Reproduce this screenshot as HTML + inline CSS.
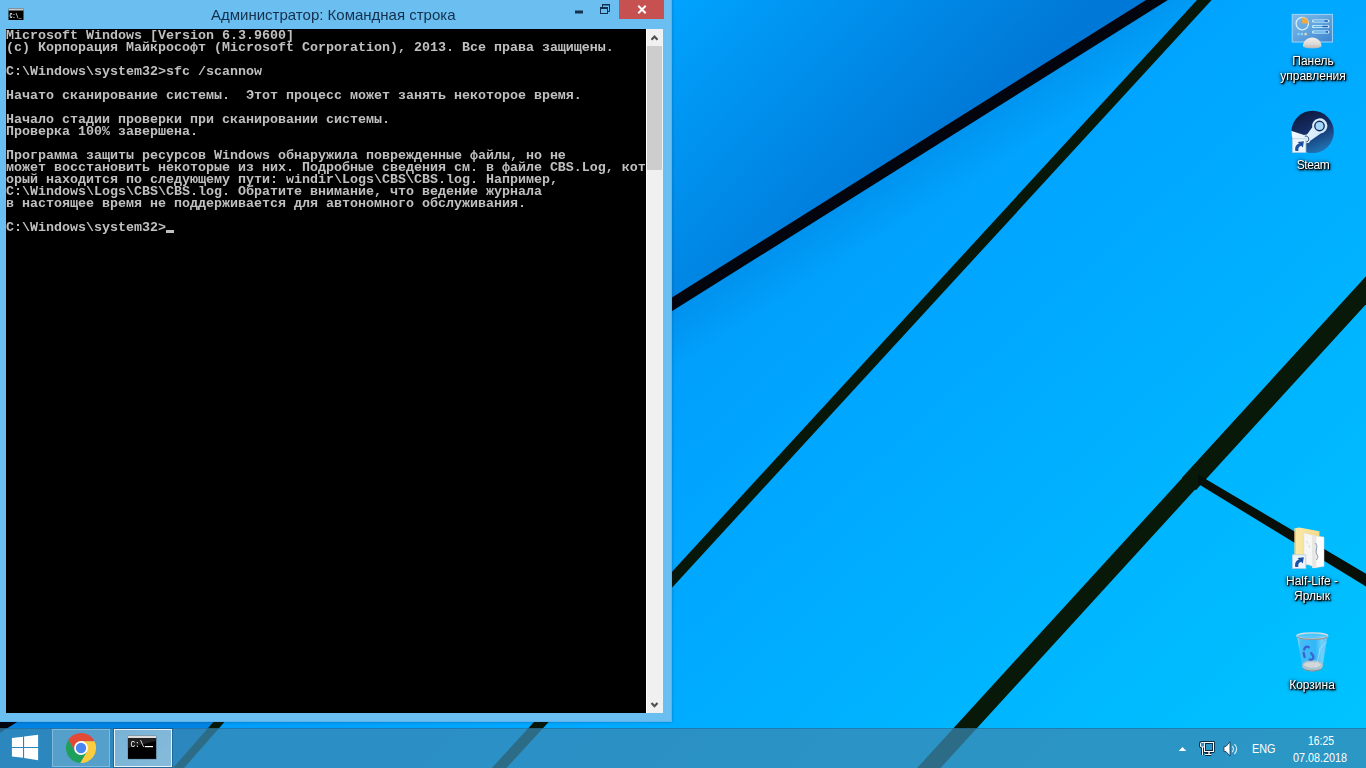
<!DOCTYPE html>
<html lang="ru">
<head>
<meta charset="utf-8">
<title>Администратор: Командная строка</title>
<style>
*{box-sizing:border-box;margin:0;padding:0}
html,body{width:1366px;height:768px;overflow:hidden;background:#0aa0f5;font-family:"Liberation Sans",sans-serif}
#desk{position:absolute;left:0;top:0;width:1366px;height:768px;overflow:hidden}
#wall{position:absolute;left:0;top:0}
/* ---------- cmd window ---------- */
#win{position:absolute;left:-1px;top:-1px;width:673px;height:723px;background:#6bbff0;border:1px solid #5fb3e8;box-shadow:0 0 3px rgba(0,20,90,.3)}
#title{position:absolute;left:0;top:0;width:672px;height:29px}
#title .cap{position:absolute;left:211px;top:6px;font-size:15px;line-height:18px;color:#14304d;white-space:nowrap;will-change:transform}
#client{position:absolute;left:6px;top:29px;width:640px;height:684px;background:#000;overflow:hidden}
#client pre{font-family:"Liberation Mono",monospace;font-weight:bold;font-size:13.333px;line-height:12px;color:#c0c0c0;white-space:pre;margin:0;position:absolute;left:0;top:1px;will-change:transform}
#sb{position:absolute;left:646px;top:29px;width:17px;height:684px;background:#f0f0f0;border-left:1px solid #fff;border-right:1px solid #e6f6fc}
#sb .thumb{position:absolute;left:0;top:17px;width:15px;height:124px;background:#cdcdcd}
#sb svg{position:absolute;left:0;top:0}
.close{position:absolute;left:619px;top:0;width:45px;height:19px;background:#c75050}
/* ---------- taskbar ---------- */
#tb{position:absolute;left:0;top:728px;width:1366px;height:40px;background:rgba(58,136,178,.75);box-shadow:inset 0 1px 0 rgba(0,60,110,.25)}
.tbtn{position:absolute;top:1px;height:39px;width:59px}
/* ---------- desktop icons ---------- */
.lbl{will-change:transform;position:absolute;width:100px;text-align:center;color:#fff;font-size:12px;line-height:15px;text-shadow:1px 1px 1px #000,1px 1px 2px #000,0 1px 3px rgba(0,0,0,.9),0 0 4px rgba(0,0,0,.7)}
.tray{position:absolute;color:#fff;font-size:12px;line-height:14px;white-space:nowrap}
</style>
</head>
<body>
<div id="desk">
<!-- WALLPAPER -->
<svg id="wall" width="1366" height="768" viewBox="0 0 1366 768">
<defs>
<linearGradient id="g0" gradientUnits="userSpaceOnUse" x1="777" y1="157" x2="1323" y2="753">
<stop offset="0" stop-color="#009bf9"/><stop offset=".25" stop-color="#00a5ff"/><stop offset="1" stop-color="#00c3ff"/>
</linearGradient>
<linearGradient id="g2" gradientUnits="userSpaceOnUse" x1="900" y1="161.200" x2="929.200" y2="207.800">
<stop offset="0" stop-color="#002878" stop-opacity=".11"/><stop offset="1" stop-color="#002878" stop-opacity="0"/>
</linearGradient>
<linearGradient id="g1" gradientUnits="userSpaceOnUse" x1="1095" y1="0" x2="880.5" y2="-210">
<stop offset="0" stop-color="#0078d7"/><stop offset="1" stop-color="#00a3fe"/>
</linearGradient>
</defs>
<rect width="1366" height="768" fill="url(#g0)"/>
<polygon points="-20,-20 1188.800,-20 -20,738.400" fill="url(#g1)"/>
<polygon points="1268.600,-70 478.900,790 -20,790 -20,738.400" fill="url(#g2)"/>
<polygon points="481.4,423 159.2,790 -20,790 -20,738.4" fill="#0083e2"/>
<g stroke-linecap="butt" fill="none">
<line x1="1200" y1="-27" x2="-20" y2="738.400" stroke="#02050e" stroke-width="11.600"/>
<line x1="1222.700" y1="-20" x2="478.900" y2="790" stroke="#07180a" stroke-width="10.800"/>
<line x1="1384" y1="270" x2="908.700" y2="790" stroke="#08190a" stroke-width="17.300"/>
<line x1="1384.500" y1="270" x2="1188.900" y2="484" stroke="#08190a" stroke-width="18.800"/>
<polygon points="1198,474.600 1370,576 1370,589 1198,483.800" fill="#070f08" stroke="none"/>
<line x1="240" y1="698" x2="159.2" y2="790" stroke="#081a04" stroke-width="8.3"/>
</g>
</svg>

<!-- DESKTOP ICONS -->
<svg id="icons" style="position:absolute;left:1266px;top:0" width="100" height="710" viewBox="1266 0 100 710">
<defs>
<linearGradient id="cp1" x1="0" y1="0" x2="1" y2="1"><stop offset="0" stop-color="#7fbbe9"/><stop offset=".5" stop-color="#5fa3df"/><stop offset="1" stop-color="#3f84ce"/></linearGradient>
<linearGradient id="cp2" x1="0" y1="0" x2="0" y2="1"><stop offset="0" stop-color="#f1efee"/><stop offset=".6" stop-color="#dcd9d7"/><stop offset="1" stop-color="#b9b6b4"/></linearGradient>
<linearGradient id="st1" x1=".2" y1="0" x2=".6" y2="1"><stop offset="0" stop-color="#0e1739"/><stop offset=".5" stop-color="#15306a"/><stop offset="1" stop-color="#2174b4"/></linearGradient>
<linearGradient id="st2" x1="0" y1="0" x2="1" y2=".3"><stop offset="0" stop-color="#ffffff"/><stop offset="1" stop-color="#cbe7fb"/></linearGradient>
<linearGradient id="fo1" x1="0" y1="0" x2="1" y2="0"><stop offset="0" stop-color="#fbeaa8"/><stop offset="1" stop-color="#f4d987"/></linearGradient>
<linearGradient id="rb1" x1="0" y1="0" x2="1" y2="0"><stop offset="0" stop-color="#b4e2fb" stop-opacity=".85"/><stop offset=".12" stop-color="#5cbcf4" stop-opacity=".75"/><stop offset=".6" stop-color="#48b4f4" stop-opacity=".7"/><stop offset=".8" stop-color="#8ad4fb" stop-opacity=".8"/><stop offset="1" stop-color="#6cc6f8" stop-opacity=".85"/></linearGradient>
<clipPath id="stc"><circle cx="1312.6" cy="131.9" r="21.2"/></clipPath>
<g id="sc"><rect x=".4" y=".4" width="13.400" height="13.600" fill="#edf5fc" stroke="#b4cde4" stroke-width=".8"/>
<path d="M3.300 12.700C2.500 8.700 4 6.100 7 5.400L5.600 3.500l6.200-.700-1 6.200-1.600-1.700C6.800 7.900 5.900 9.800 6.300 12.700z" fill="#1f4fa0"/></g>
</defs>

<!-- Control Panel -->
<rect x="1292.200" y="14.400" width="40.200" height="27.600" fill="url(#cp1)" stroke="#a4d3f5" stroke-width="1"/>
<circle cx="1302.250" cy="23.600" r="6.200" fill="none" stroke="#d3eefb" stroke-width="1.300"/>
<path d="M1302.250 23.600V17.200A6.400 6.400 0 0 1 1308.650 23.600z" fill="#f4aa3e"/>
<g stroke-linecap="round" fill="none"><path d="M1313.500 21h14.400M1313.500 26.500h14.400M1313.500 31.900h14.400" stroke="#d9f3fd" stroke-width="3"/>
<path d="M1314 21h13.400M1314 26.500h13.400M1314 31.900h13.400" stroke="#5aaee6" stroke-width="1.500"/>
<path d="M1325 21h2.400M1323 26.500h4.400M1326.500 31.900h1" stroke="#2a5fb4" stroke-width="1.600"/></g>
<circle cx="1298.500" cy="34.100" r="1.300" fill="#7ad8f6"/><circle cx="1301.900" cy="34.100" r="1.300" fill="#8fd3f5"/><circle cx="1305.600" cy="34.100" r="1.300" fill="#f0d7a8"/>
<path d="M1302.900 46c0-4.700 4.200-8.500 9.300-8.500s9.300 3.800 9.300 8.500c0 1.400-4.200 2.400-9.300 2.400s-9.300-1-9.300-2.400z" fill="url(#cp2)"/>
<!-- Steam -->
<circle cx="1312.6" cy="131.9" r="21.2" fill="url(#st1)"/>
<g clip-path="url(#stc)">
<path d="M1288 129.600L1304 135.100C1305 134.500 1306 134.300 1307 134.400L1312.300 127.300A7.600 7.600 0 1 1 1320.700 133.500L1310.300 140.700A3.800 3.800 0 0 1 1303 140.500L1300 139.500V160H1285z" fill="url(#st2)"/>
</g>
<circle cx="1319.5" cy="126" r="4.700" fill="#a3d8fa" stroke="#152a5c" stroke-width="1.400"/>
<path d="M1304.800 136.200a3 3 0 1 1 -.600 5.400" fill="none" stroke="#1a3a73" stroke-width=".9"/>
<use href="#sc" x="1292.100" y="138.400"/>

<!-- Half-Life shortcut (folder) -->
<polygon points="1294.6,528.300 1299.500,527.600 1319.400,531.200 1319.400,560 1303,566.500 1294.600,556" fill="url(#fo1)"/>
<polygon points="1294.600,528.300 1296,528.100 1296,557.500 1294.600,556" fill="#ecd07a"/>
<polygon points="1303.800,532.800 1316.500,536.200 1316.500,567.800 1303.800,563" fill="#f6f6f4" stroke="#d8d8d4" stroke-width=".5"/>
<polygon points="1312.500,535.600 1324,537 1324,566.400 1312.500,568" fill="#ffffff" stroke="#d4d4d0" stroke-width=".5"/>
<polygon points="1312.500,535.600 1316.500,536.200 1316.500,567.400 1312.500,568" fill="#e6e6e2"/>
<path d="M1315.500 543l1.500 3 -1 6 2 5 -1.500 3" stroke="#8b9bb3" stroke-width="1" fill="none"/>
<path d="M1306.500 541l1.200 2.500M1309 545l.8 3" stroke="#c3c9d3" stroke-width=".7" fill="none"/>
<use href="#sc" x="1292" y="554.400"/>

<!-- Recycle bin -->
<path d="M1297 636L1302.200 666.500c.300 2.800 4.700 4.900 10.200 4.900s9.900-2.100 10.200-4.900L1327.600 636z" fill="url(#rb1)"/>
<path d="M1302.200 664.500c1-2.600 5-4.300 10.200-4.300s9.200 1.700 10.200 4.300v2c-.300 2.800-4.700 4.900-10.200 4.900s-9.900-2.100-10.200-4.900z" fill="#c4c4c2" opacity=".8"/>
<path d="M1302.300 667.200c.600 2.500 4.900 4.200 10.100 4.200s9.500-1.700 10.100-4.200c-1 2-5 3.200-10.100 3.200s-9.100-1.200-10.100-3.200z" fill="#7d7f80"/>
<ellipse cx="1312.400" cy="664.800" rx="8.600" ry="2.900" fill="#e2e0dd" opacity=".7"/>
<path d="M1304.200 649.500c.600-2.600 2.600-3.600 4.600-2.200M1304.600 657l-1-4.200M1309.800 659.500c2.600.700 4.200-1 3.400-3.400l-2-3" stroke="#3a62d0" stroke-width="2.300" fill="none" stroke-linecap="round"/>
<path d="M1319 650l7-8M1316 668l4-18" stroke="#c9ecfd" stroke-width=".8" opacity=".7" fill="none"/>
<ellipse cx="1312.300" cy="636" rx="15.500" ry="3.100" fill="#7fcdf8" fill-opacity=".6" stroke="#d4dde2" stroke-width="1.200"/>
<path d="M1296.900 636.600a15.500 3.100 0 0 0 30.800 0" fill="none" stroke="#8e9ba2" stroke-width="1.300"/>
</svg>
<div class="lbl" style="left:1263px;top:54px">Панель<br>управления</div>
<div class="lbl" style="left:1262.500px;top:158px;letter-spacing:-.4px">Steam</div>
<div class="lbl" style="left:1262px;top:574px">Half-Life -<br>Ярлык</div>
<div class="lbl" style="left:1262px;top:678px">Корзина</div>

<!-- CMD WINDOW -->
<div id="win">
<div id="title"><span class="cap">Администратор: Командная строка</span></div>
<div class="close"><svg width="45" height="19" viewBox="0 0 45 19"><path d="M19.3 5.8l7.4 7.4M26.7 5.8l-7.4 7.4" stroke="#fff" stroke-width="2" fill="none"/></svg></div>
<svg style="position:absolute;left:0;top:0;will-change:transform" width="620" height="29" viewBox="0 0 620 29">
<!-- app icon -->
<rect x="8.5" y="8.5" width="15" height="11.5" fill="#000"/><rect x="8.5" y="8.5" width="15" height="2" fill="#c9c9c9"/>
<text x="9.6" y="17.6" font-family="Liberation Mono, monospace" font-weight="bold" font-size="6.5" fill="#fff" textLength="12" lengthAdjust="spacingAndGlyphs">C:\_</text>
<!-- minimize -->
<rect x="575" y="10.5" width="8" height="3" fill="#173050"/>
<!-- restore -->
<path d="M602.5 7.5v-3h7v7h-2" fill="none" stroke="#173050" stroke-width="1"/><rect x="602" y="4" width="8" height="1.5" fill="#173050"/>
<rect x="600.5" y="7.5" width="7" height="6" fill="none" stroke="#173050" stroke-width="1"/><rect x="600" y="7" width="8" height="2" fill="#173050"/>
</svg>
<div id="client"><pre>Microsoft Windows [Version 6.3.9600]
(c) Корпорация Майкрософт (Microsoft Corporation), 2013. Все права защищены.

C:\Windows\system32&gt;sfc /scannow

Начато сканирование системы.  Этот процесс может занять некоторое время.

Начало стадии проверки при сканировании системы.
Проверка 100% завершена.

Программа защиты ресурсов Windows обнаружила поврежденные файлы, но не
может восстановить некоторые из них. Подробные сведения см. в файле CBS.Log, кот
орый находится по следующему пути: windir\Logs\CBS\CBS.log. Например,
C:\Windows\Logs\CBS\CBS.log. Обратите внимание, что ведение журнала
в настоящее время не поддерживается для автономного обслуживания.

C:\Windows\system32&gt;</pre><div style="position:absolute;left:160px;top:201px;width:8px;height:3px;background:#c0c0c0"></div></div>
<div id="sb"><div class="thumb"></div>
<svg width="15" height="684" viewBox="0 0 15 684"><path d="M4.500 10.800l3-3.200 3 3.200M4.500 674l3 3.200 3-3.200" fill="none" stroke="#505050" stroke-width="2.200"/></svg></div>
</div>

<!-- TASKBAR -->
<div id="tb">
<!-- start -->
<svg style="position:absolute;left:0;top:0" width="52" height="40" viewBox="0 728 52 40">
<g fill="#fff">
<polygon points="11.9,738.0 23.0,736.7 23.0,746.9 11.9,746.9"/>
<polygon points="24.1,736.6 38.1,734.8 38.1,746.9 24.1,746.9"/>
<polygon points="11.9,748.1 23.0,748.1 23.0,757.8 11.9,756.4"/>
<polygon points="24.1,748.1 38.1,748.1 38.1,760.2 24.1,757.9"/>
</g></svg>
<!-- chrome button -->
<div class="tbtn" style="left:52px;width:58px;top:1px;height:38px;background:rgba(255,255,255,.2);border:1px solid rgba(255,255,255,.28)"></div>
<svg style="position:absolute;left:64px;top:3px" width="34" height="34" viewBox="-17 -17 34 34">
<path d="M-5.89 3.4L-12.63 -8.27A15.1 15.1 0 0 1 13.48 -6.8L0 -6.8L0 0Z" fill="#e24a36"/>
<path d="M0 -6.8L13.48 -6.8A15.1 15.1 0 0 1 -0.85 15.07L5.89 3.4L0 0Z" fill="#fccd3f"/>
<path d="M5.89 3.4L-0.85 15.07A15.1 15.1 0 0 1 -12.63 -8.27L-5.89 3.4L0 0Z" fill="#1fa05a"/>
<circle r="6.9" fill="#fff"/><circle r="5.2" fill="#4a86ef"/>
</svg>
<!-- cmd button -->
<div class="tbtn" style="left:113px;width:60px;top:0;height:40px;border:1px solid rgba(10,50,90,.35)"></div>
<div class="tbtn" style="left:114px;width:58px;top:1px;height:38px;background:linear-gradient(135deg,rgba(255,255,255,.36),rgba(255,255,255,.43));border:1px solid rgba(255,255,255,.82)"></div>
<svg style="position:absolute;left:126px;top:6px;will-change:transform" width="32" height="27" viewBox="126 734 32 27">
<rect x="128.6" y="736.6" width="28.2" height="23" fill="rgba(0,0,0,.18)"/>
<rect x="127.9" y="735.7" width="28.2" height="23.2" fill="#000"/>
<rect x="127.9" y="735.7" width="28.2" height="2.3" fill="#dcdcdc"/>
<polygon points="127.9,738 156.1,738 156.1,741 127.9,748" fill="#3a3a3a" opacity=".55"/>
<text x="130.400" y="746.900" font-family="Liberation Mono, monospace" font-size="9.500" fill="#fff" textLength="14" lengthAdjust="spacingAndGlyphs">C:\</text>
<rect x="144.8" y="746" width="8.2" height="1.2" fill="#fff"/>
</svg>
<!-- tray -->
<svg style="position:absolute;left:1170px;top:4px" width="80" height="32" viewBox="1170 732 80 32">
<polygon points="1182.5,746.9 1186.3,751 1178.7,751" fill="#fff"/>
<g fill="none" stroke="#0c2a40" stroke-width="2.800" stroke-linejoin="round">
<rect x="1204.500" y="742.500" width="9" height="9"/><path d="M1209 751.500v3M1205 754.500h6.500"/>
<rect x="1200.500" y="742.500" width="4" height="4.500" rx="1"/><path d="M1202.500 747v8"/>
</g>
<g fill="none" stroke="#fff" stroke-width="1">
<rect x="1204.500" y="742.500" width="9" height="9"/><path d="M1209 751.500v3" stroke-width="1.300"/><path d="M1205 754.500h6.500"/>
<rect x="1200.500" y="742.500" width="4" height="4.500" rx="1" fill="#2f8fc4"/><path d="M1202.500 747v8"/>
</g>
<path d="M1224 746.4h2l4-4.6v14.2l-4-4.4h-2z" fill="#fff" stroke="#10324a" stroke-width=".8"/>
<path d="M1232.2 746.2a4 4 0 0 1 0 5.8M1234.4 744.2a6.6 6.6 0 0 1 0 9.8" fill="none" stroke="#dff1fb" stroke-width="1.1"/>
</svg>
<span class="tray" style="left:1251.7px;top:14px;transform:scaleX(.9);transform-origin:left top">ENG</span>
<span class="tray" style="left:1306px;top:6px;width:30px;text-align:center;transform:scaleX(.862)">16:25</span>
<span class="tray" style="left:1290px;top:23px;width:60px;text-align:center;transform:scaleX(.9)">07.08.2018</span>
</div>
</div>
</body>
</html>
